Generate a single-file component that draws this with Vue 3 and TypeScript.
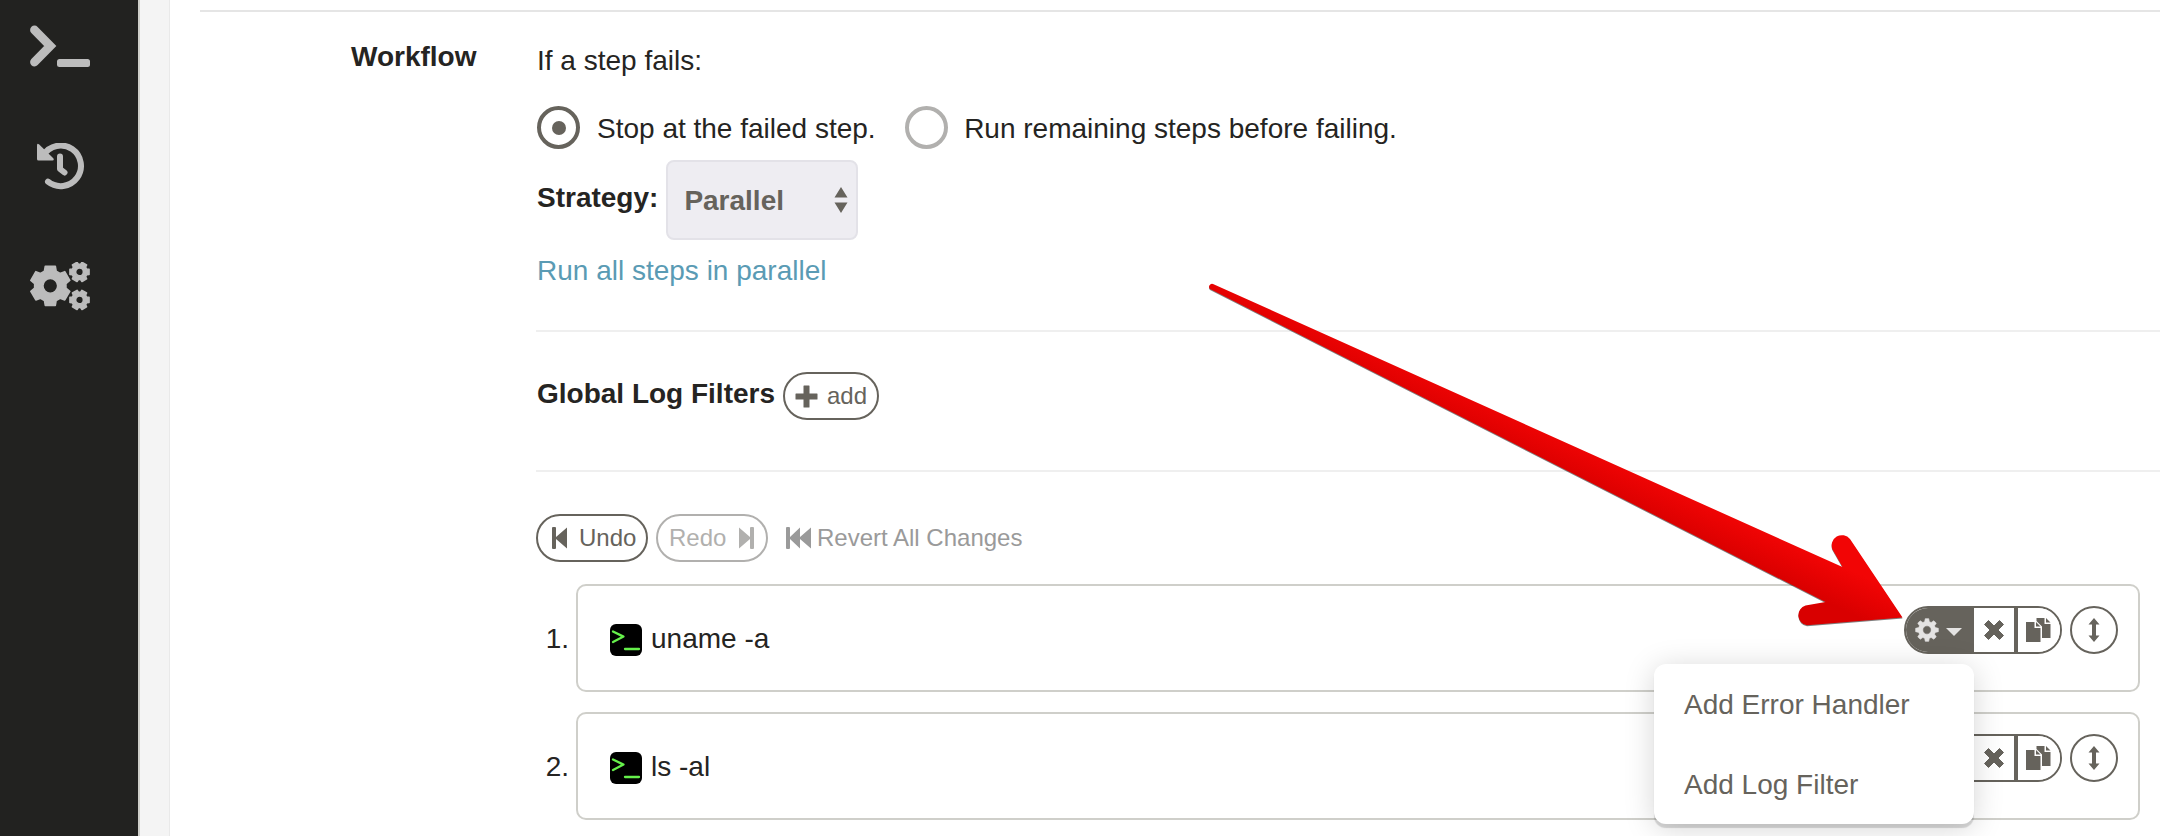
<script setup lang="ts">
import { ref } from 'vue'

interface Step { id: number; command: string }

const steps: Step[] = [
  { id: 1, command: 'uname -a' },
  { id: 2, command: 'ls -al' },
]
const menuItems: string[] = ['Add Error Handler', 'Add Log Filter']
const openMenu = ref<number>(1)
const failureMode = ref<'stop' | 'continue'>('stop')

// Closed outline of a cog with trapezoid teeth, followed by its round hole.
function cog(cx: number, cy: number, outer: number, inner: number, hole: number, teeth: number, start: number, wide: number, narrow: number): string {
  const points: string[] = []
  const at = (r: number, a: number): void => {
    points.push(`${(cx + r * Math.cos(a)).toFixed(2)} ${(cy + r * Math.sin(a)).toFixed(2)}`)
  }
  for (let i = 0; i < teeth; i++) {
    const a = start + (i * 2 * Math.PI) / teeth
    at(inner, a - wide)
    at(outer, a - narrow)
    at(outer, a + narrow)
    at(inner, a + wide)
  }
  return `M${points.join('L')}Z M${cx - hole} ${cy}a${hole} ${hole} 0 1 0 ${2 * hole} 0a${hole} ${hole} 0 1 0 ${-2 * hole} 0Z`
}

const bigCog = cog(20.3, 23.8, 20.2, 15.8, 7.4, 6, Math.PI / 6, 0.38, 0.25)
const topCog = cog(49.5, 9.9, 9.9, 7.7, 3.9, 6, 0, 0.38, 0.27)
const lowCog = cog(49.5, 37.9, 9.9, 7.7, 3.9, 6, 0, 0.38, 0.27)
const buttonCog = cog(12, 12, 11.5, 8.6, 4.2, 8, 0, 0.28, 0.15)
</script>

<template>
  <div class="app">
    <nav class="sidebar">
      <a class="nav-item">
        <svg width="62" height="44" viewBox="0 0 62 44">
          <path d="M4.500 6L20.200 22L4.500 38" fill="none" stroke="#bcbcbc" stroke-width="8.800" stroke-linecap="round" />
          <rect x="27" y="35" width="33" height="8" rx="2.5" fill="#bcbcbc" />
        </svg>
      </a>
      <a class="nav-item">
        <svg width="48" height="48" viewBox="0 0 48 48">
          <path d="M7.500 12A20.300 20.300 0 1 1 12 38.700" fill="none" stroke="#bcbcbc" stroke-width="6" stroke-linecap="round" />
          <path d="M1 2.500Q1 -.5 3.200 1.500L17.300 15.200Q18.500 17.500 16.500 17.500H2.500Q1 17.500 1 16Z" fill="#bcbcbc" />
          <path d="M24 13.500V26L28.500 29.500" fill="none" stroke="#bcbcbc" stroke-width="6" stroke-linecap="round" stroke-linejoin="round" />
        </svg>
      </a>
      <a class="nav-item">
        <svg width="62" height="50" viewBox="0 0 62 50">
          <g fill="#bcbcbc" stroke="#bcbcbc" stroke-width="1.6" stroke-linejoin="round" fill-rule="evenodd">
            <path :d="bigCog" /><path :d="topCog" /><path :d="lowCog" />
          </g>
        </svg>
      </a>
    </nav>
    <div class="gutter"></div>
    <main class="panel">
      <div class="section">
        <h2 class="label">Workflow</h2>
        <div class="body">
          <div class="intro">If a step fails:</div>
          <div class="radios">
            <label class="option" @click="failureMode = 'stop'">
              <span class="radio" :class="{ on: failureMode === 'stop' }"></span><span class="caption">Stop at the failed step.</span>
            </label>
            <label class="option" @click="failureMode = 'continue'">
              <span class="radio" :class="{ on: failureMode === 'continue' }"></span><span class="caption">Run remaining steps before failing.</span>
            </label>
          </div>
          <div class="strategy">
            <b>Strategy:</b>
            <div class="select">
              <span>Parallel</span>
              <svg width="14" height="28" viewBox="0 0 14 28"><path d="M.5 11.500L7 1L13.500 11.500ZM.5 16.500H13.500L7 27Z" fill="#66635c" /></svg>
            </div>
          </div>
          <a class="help">Run all steps in parallel</a>
          <div class="filters">
            <b>Global Log Filters</b>
            <button class="pill add">
              <svg width="23" height="23" viewBox="0 0 23 23"><path d="M9 .5h5q.5 0 .5.5v7.5h7.5q.5 0 .5.5v5q0 .5-.5.5h-7.500v7.500q0 .5-.5.5h-5q-.5 0-.5-.5v-7.500h-7.500q-.5 0-.5-.5v-5q0-.5.5-.5h7.500v-7.500q0-.5.5-.5z" fill="currentColor" /></svg>
              <span>add</span>
            </button>
          </div>
          <div class="history">
            <button class="pill undo">
              <svg width="15" height="22" viewBox="0 0 15 22"><path d="M0 1q0-1 1-1h2q1 0 1 1v9L15 .5v21L4 12v9q0 1-1 1H1q-1 0-1-1z" fill="currentColor" /></svg>
              <span>Undo</span>
            </button>
            <button class="pill redo">
              <span>Redo</span>
              <svg width="15" height="22" viewBox="0 0 15 22"><path d="M15 1q0-1-1-1h-2q-1 0-1 1v9L0 .5v21L11 12v9q0 1 1 1h2q1 0 1-1z" fill="currentColor" /></svg>
            </button>
            <a class="revert">
              <svg width="25" height="22" viewBox="0 0 25 22"><path d="M0 1q0-1 1-1h2q1 0 1 1v9L14 .5V10L25 .5v21L14 12v9.500L4 12v9q0 1-1 1H1q-1 0-1-1z" fill="currentColor" /></svg>
              <span>Revert All Changes</span>
            </a>
          </div>
          <div class="steps">
            <div v-for="step in steps" :key="step.id" class="row">
              <span class="number">{{ step.id }}.</span>
              <div class="step">
                <svg class="shell" width="32" height="32" viewBox="0 0 32 32">
                  <rect width="32" height="32" rx="6" />
                  <path d="M3 7.500L13.500 12.600L3 18M15 25H29" fill="none" stroke="#66f04b" stroke-width="2.300" stroke-linecap="round" stroke-linejoin="round" />
                </svg>
                <span class="command">{{ step.command }}</span>
                <div class="actions">
                  <div class="group">
                    <button class="gear" @click="openMenu = step.id">
                      <svg width="24" height="24" viewBox="0 0 24 24"><path :d="buttonCog" fill="#e4e3e2" fill-rule="evenodd" stroke="#e4e3e2" stroke-width=".6" stroke-linejoin="round" /></svg>
                      <svg width="16" height="8" viewBox="0 0 16 8"><path d="M0 0H16L8 8Z" fill="#e4e3e2" /></svg>
                    </button>
                    <button class="remove">
                      <svg width="20" height="20" viewBox="0 0 20 20"><path d="M.5 4.500L4.500.5L10 6L15.500.5L19.500 4.500L14 10L19.500 15.500L15.500 19.500L10 14L4.500 19.500L.5 15.500L6 10Z" fill="#66635c" stroke="#66635c" stroke-linejoin="round" /></svg>
                    </button>
                    <button class="copy">
                      <svg width="25" height="24" viewBox="0 0 25 24"><path d="M0 4H8.500V10H14.500V24H0ZM10 4L14.500 8.500H10ZM10.500 0H18.500V6H24.500V20H16V8.500L10.500 3ZM20 0L24.500 4.500H20Z" fill="#66635c" /></svg>
                    </button>
                  </div>
                  <button class="drag">
                    <svg width="12" height="24" viewBox="0 0 12 24"><path d="M6 0L11.500 6.500H8V17.500H11.500L6 24L.5 17.500H4V6.500H.5Z" fill="#66635c" /></svg>
                  </button>
                </div>
                <div v-if="openMenu === step.id" class="menu">
                  <a v-for="item in menuItems" :key="item">{{ item }}</a>
                </div>
              </div>
            </div>
          </div>
        </div>
      </div>
    </main>
    <svg class="pointer" width="720" height="360" viewBox="1200.500 276.500 720 360">
      <defs>
        <linearGradient id="pointer-fill" gradientUnits="userSpaceOnUse" x1="1815" y1="553" x2="1798" y2="588.600">
          <stop offset="0" stop-color="#f20505" />
          <stop offset=".5" stop-color="#e60202" />
          <stop offset="1" stop-color="#d90000" />
        </linearGradient>
      </defs>
      <path d="M1213.500 284.500L1843 567.500L1833 550A10.300 10.300 0 0 1 1850.500 539.500L1903 618L1807.500 625.800A10.200 10.200 0 0 1 1806 606L1826 602.500L1210.500 289.500A3 3 0 0 1 1213.500 284.500Z" fill="url(#pointer-fill)" />
    </svg>
  </div>
</template>

<style>
html, body { margin: 0; overflow: hidden; background: #fff; }
</style>

<style scoped>
* { box-sizing: border-box; }
.app { position: relative; display: flex; height: 836px; overflow: hidden; font: 28px/40px "Liberation Sans", Arial, sans-serif; color: #252422; }
svg { display: block; flex: none; }
.sidebar { width: 140px; flex: none; background: #222220; border-right: 2px solid #cfcfca; padding-top: 24px; }
.nav-item { display: flex; height: 119px; padding-left: 30px; }
.nav-item:nth-child(2) { padding-left: 36px; }
.gutter { width: 30px; flex: none; background: #f4f4f4; border-right: 1px solid #e9e9e9; }
.panel { flex: 1; min-width: 0; padding: 10px 8px 0 30px; }
.section { display: flex; border-top: 2px solid #e5e5e5; }
.label { width: 276.500px; margin: 25px 0 0; font-size: 28px; line-height: 40px; text-align: right; }
.body { flex: 1; margin-left: 59.500px; padding-top: 29px; }
.intro { height: 65px; padding-left: 1px; }
.radios { display: flex; height: 43px; gap: 29px; padding-left: 1px; }
.option { display: flex; align-items: center; gap: 17px; white-space: nowrap; }
.option + .option { gap: 16.500px; }
.caption { padding-top: 2px; }
.radio { display: grid; place-items: center; width: 43px; height: 43px; border: 4px solid #b1b0ae; border-radius: 50%; }
.radio.on { border-color: #66635c; }
.radio.on::after { content: ""; width: 14px; height: 14px; border-radius: 50%; background: #66635c; }
.strategy { display: flex; align-items: flex-start; gap: 8px; height: 80px; margin-top: 11px; padding-left: 1px; }
.strategy b { padding-top: 18px; }
.select { display: flex; align-items: center; justify-content: space-between; width: 192px; height: 80px; padding: 0 8px 0 16px; border: 2px solid #e3e2e8; border-radius: 8px; background: #eeedf2; color: #66635c; font-weight: bold; }
.select span { padding-top: 1px; }
.help { display: block; height: 90px; padding: 11px 0 0 1px; color: #5a9bb4; }
.filters { display: flex; align-items: flex-start; gap: 8px; height: 142px; border: solid #efefef; border-width: 2px 0; padding-top: 40px; }
.filters b { padding: 2px 0 0 1px; }
.pill { display: flex; align-items: center; height: 48px; padding: 0; border: 2px solid #66635c; border-radius: 24px; background: #fff; color: #66635c; font: 24px/40px "Liberation Sans", Arial, sans-serif; }
.add { width: 96px; padding-left: 10px; gap: 9px; }
.history { display: flex; align-items: center; height: 48px; margin-top: 42px; gap: 8px; }
.undo { width: 112px; padding-left: 14px; gap: 12px; }
.redo { width: 112px; padding-left: 11px; gap: 13px; color: #b1b0ae; border-color: #b1b0ae; }
.revert { display: flex; align-items: center; gap: 6px; margin-left: 10px; font-size: 24px; color: #9a9a9a; }
.steps { margin-top: 22px; }
.row { display: flex; align-items: center; height: 108px; margin-bottom: 20px; }
.number { width: 33px; padding-top: 1px; text-align: right; }
.step { position: relative; display: flex; align-items: center; flex: 1; height: 108px; margin: 0 20px 0 7px; padding: 0 20px 0 32px; border: 2px solid #cfcfca; border-radius: 10px; }
.shell { margin-top: 4px; }
.command { margin-left: 9px; padding-top: 1px; }
.actions { display: flex; gap: 8px; margin: -16px 0 0 auto; }
.group { display: flex; width: 158px; height: 48px; border: 2px solid #66635c; border-radius: 24px; overflow: hidden; }
button { flex: none; }
.gear, .remove, .copy { display: flex; align-items: center; justify-content: center; height: 44px; border: 0; padding: 0; background: #fff; }
.gear { width: 68px; padding-right: 3px; background: #66635c; gap: 7px; }
.gear svg + svg { margin-top: 3px; }
.remove { width: 40px; }
.copy { width: 46px; padding-right: 1px; border-left: 4px solid #66635c; }
.drag { display: grid; place-items: center; width: 48px; height: 48px; padding: 0; border: 2px solid #66635c; border-radius: 50%; background: #fff; }
.menu { position: absolute; z-index: 2; top: 78px; right: 164px; width: 320px; height: 160px; border-radius: 12px; background: #fff; box-shadow: 0 4px 1px rgba(0,0,0,.15), 0 4px 30px rgba(0,0,0,.17); color: #66635c; }
.menu a { display: flex; align-items: center; height: 80px; padding: 2px 0 0 30px; }
.pointer { position: absolute; z-index: 3; left: 1200px; top: 276px; filter: drop-shadow(0 1px .5px rgba(0,0,0,.5)); pointer-events: none; }
</style>
